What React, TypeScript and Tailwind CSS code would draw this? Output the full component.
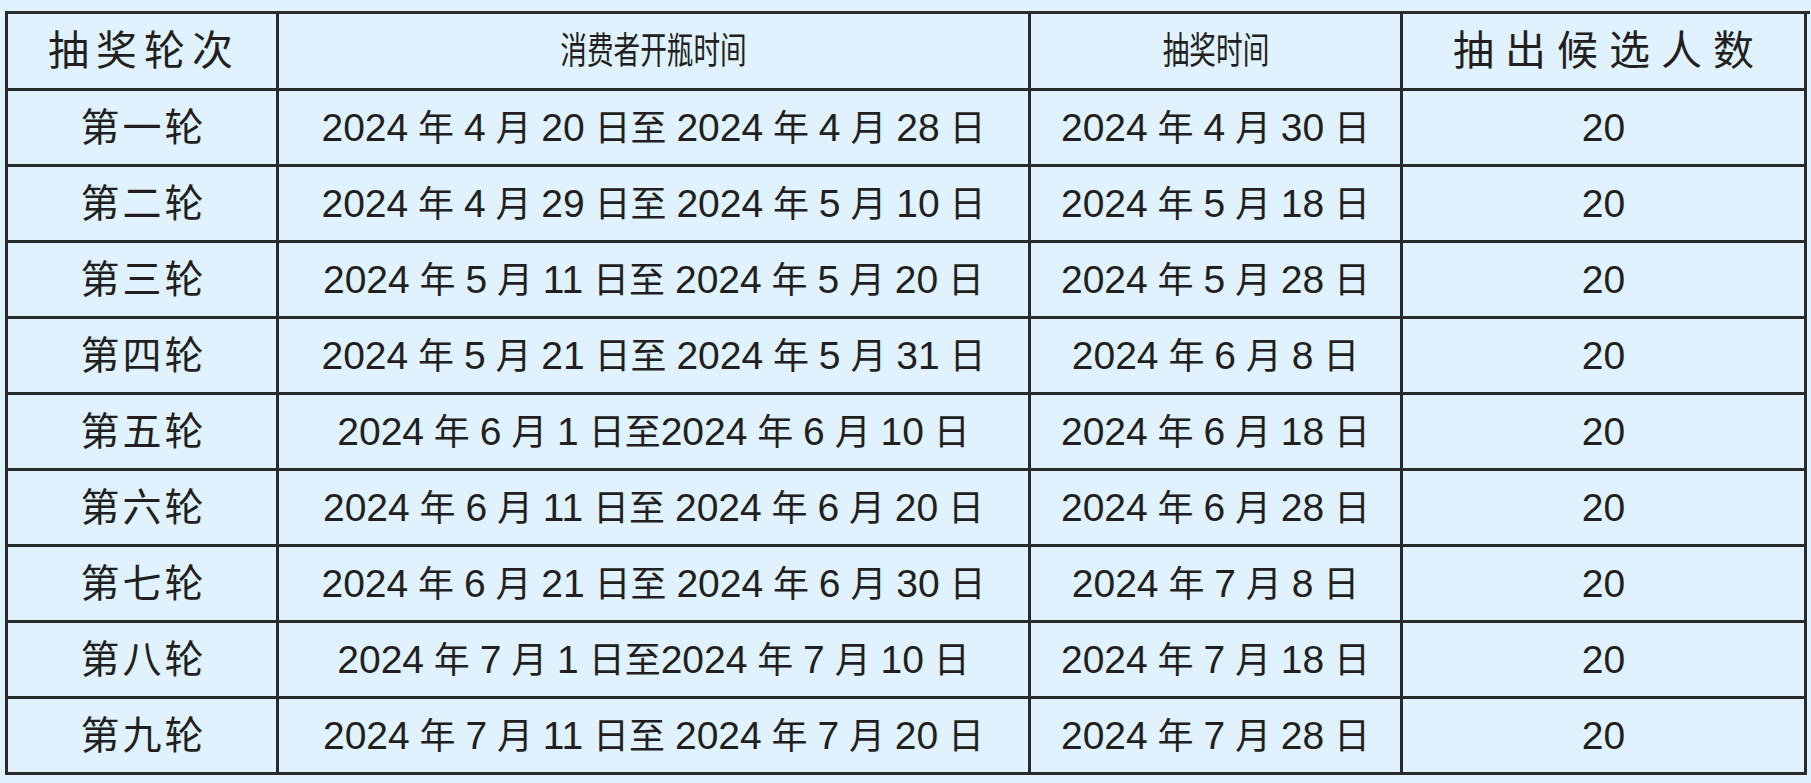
import React from "react";

const rows: [string, string, string, string][] = [
  ["第一轮", "2024 年 4 月 20 日至 2024 年 4 月 28 日", "2024 年 4 月 30 日", "20"],
  ["第二轮", "2024 年 4 月 29 日至 2024 年 5 月 10 日", "2024 年 5 月 18 日", "20"],
  ["第三轮", "2024 年 5 月 11 日至 2024 年 5 月 20 日", "2024 年 5 月 28 日", "20"],
  ["第四轮", "2024 年 5 月 21 日至 2024 年 5 月 31 日", "2024 年 6 月 8 日", "20"],
  ["第五轮", "2024 年 6 月 1 日至2024 年 6 月 10 日", "2024 年 6 月 18 日", "20"],
  ["第六轮", "2024 年 6 月 11 日至 2024 年 6 月 20 日", "2024 年 6 月 28 日", "20"],
  ["第七轮", "2024 年 6 月 21 日至 2024 年 6 月 30 日", "2024 年 7 月 8 日", "20"],
  ["第八轮", "2024 年 7 月 1 日至2024 年 7 月 10 日", "2024 年 7 月 18 日", "20"],
  ["第九轮", "2024 年 7 月 11 日至 2024 年 7 月 20 日", "2024 年 7 月 28 日", "20"],
];

function Mixed({ text }: { text: string }) {
  const parts = text.split(/([\u4e00-\u9fff]+)/);
  return (
    <span className="whitespace-pre [word-spacing:-1px]">
      {parts.map((p, i) =>
        /[\u4e00-\u9fff]/.test(p) ? (
          <span key={i} className="text-[36px]">
            {p}
          </span>
        ) : (
          <span key={i}>{p}</span>
        )
      )}
    </span>
  );
}

const cell =
  "flex items-center justify-center border-r-[3px] border-b-[3px] border-[#2a2a2a] text-[#231f20]";

export default function App() {
  return (
    <div className="w-[1811px] h-[783px] bg-[#dff2fd] pt-[11px] pl-[5px] font-['Liberation_Sans','Noto_Sans_CJK_SC',sans-serif] overflow-hidden">
      <div className="grid w-[1805px] grid-cols-[271px_752px_372px_404px] grid-rows-[77px_repeat(9,76px)] border-l-[3px] border-t-[3px] border-[#2a2a2a]">
        <div className={cell}>
          <span className="text-[41px] tracking-[7px] pl-[4px] leading-none">抽奖轮次</span>
        </div>
        <div className={cell}>
          <span className="inline-block text-[37px] leading-none scale-x-[0.72]">消费者开瓶时间</span>
        </div>
        <div className={cell}>
          <span className="inline-block text-[37px] leading-none scale-x-[0.72]">抽奖时间</span>
        </div>
        <div className={cell}>
          <span className="text-[41px] tracking-[11px] pl-[11px] leading-none">抽出候选人数</span>
        </div>
        {rows.map((r, i) => (
          <React.Fragment key={i}>
            <div className={cell}>
              <span className="text-[39px] tracking-[3px] pl-[3px] leading-none">{r[0]}</span>
            </div>
            <div className={cell}>
              <span className="text-[39px] leading-none">
                <Mixed text={r[1]} />
              </span>
            </div>
            <div className={cell}>
              <span className="text-[39px] leading-none">
                <Mixed text={r[2]} />
              </span>
            </div>
            <div className={cell}>
              <span className="text-[39px] leading-none">{r[3]}</span>
            </div>
          </React.Fragment>
        ))}
      </div>
    </div>
  );
}
